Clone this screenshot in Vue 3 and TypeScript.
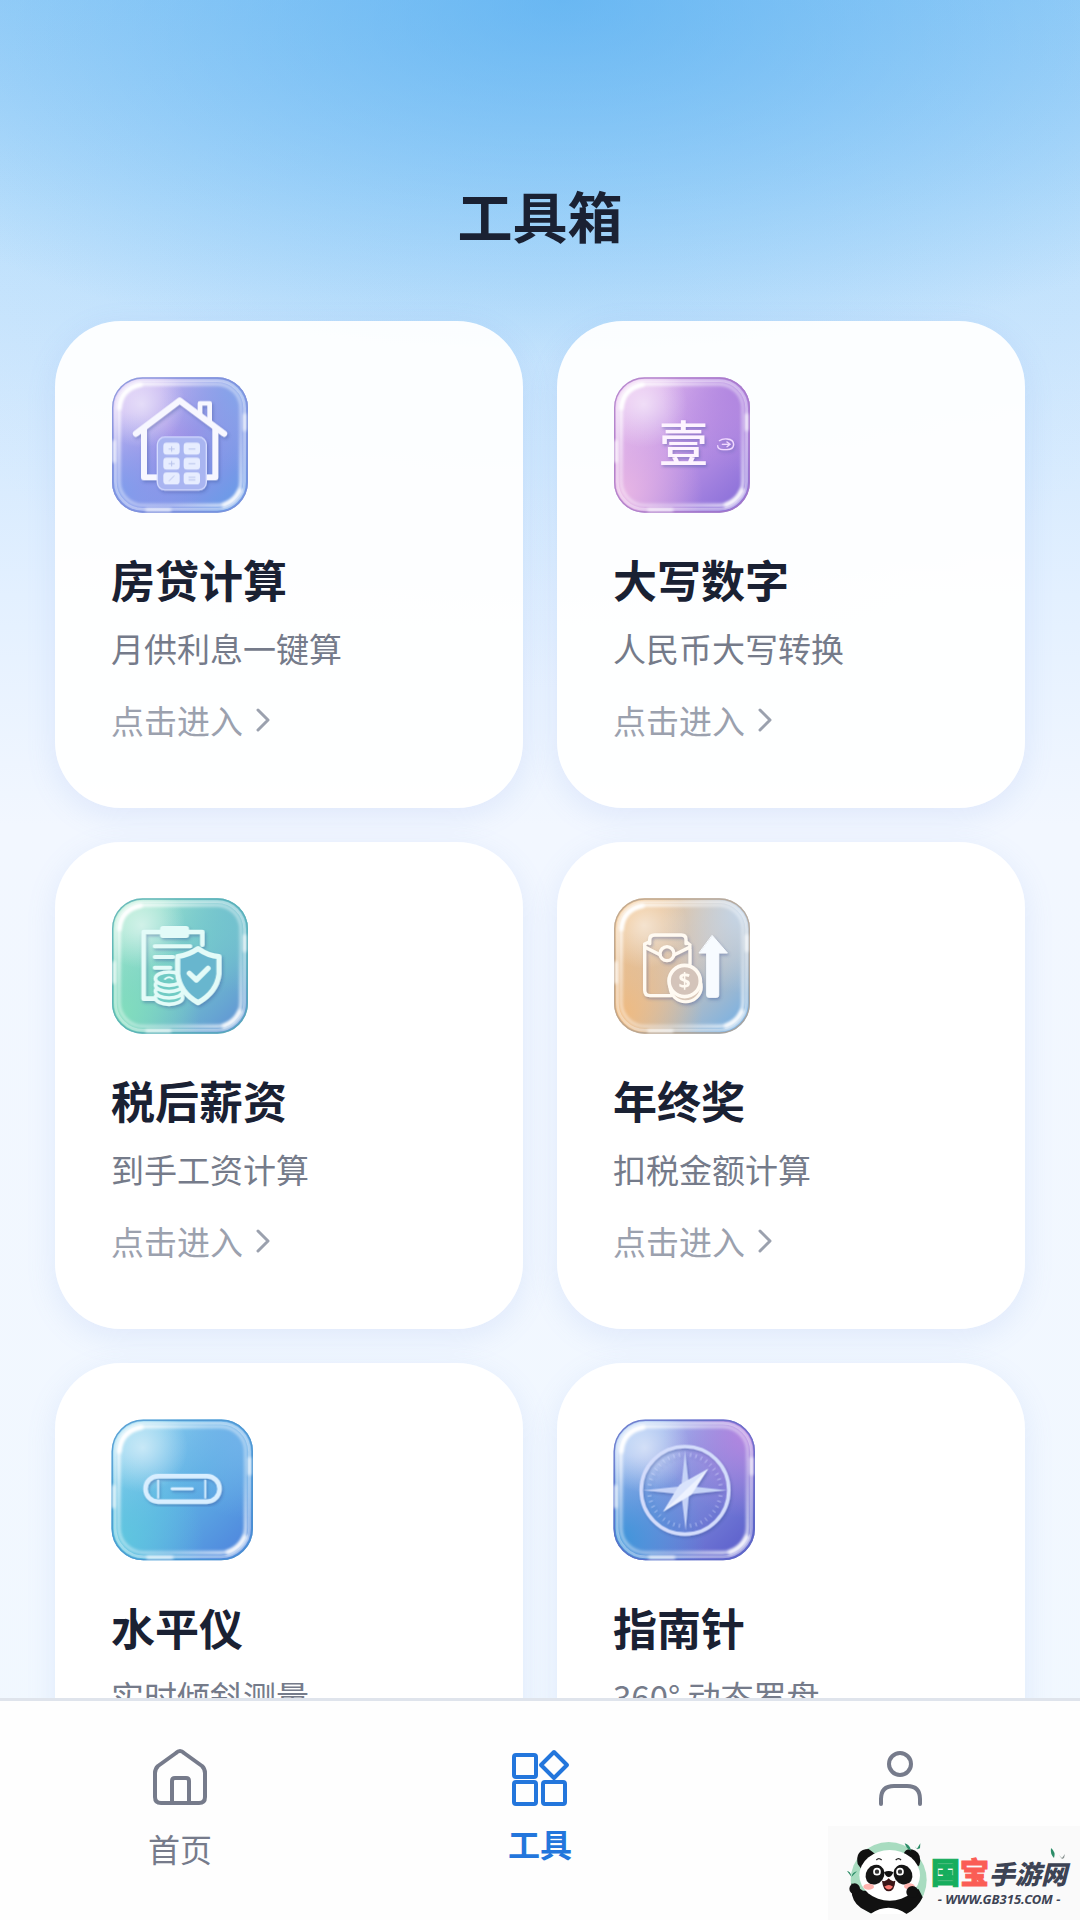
<script setup lang="ts">
interface Tool {
  id: string
  name: string
  desc: string
  box: string
  large?: boolean
  start: string
  mid: string
  end: string
  topRight: string
  bottomLeft: string
  rim: string
}

const tools: Tool[] = [
  { id: 'loan', name: '房贷计算', desc: '月供利息一键算', box: '35 37 410 408', start: '#d3c0f4', mid: '#9d90e6', end: '#6a9be8', topRight: '#83a5ea', bottomLeft: '#809dec', rim: '#7d90d8' },
  { id: 'number', name: '大写数字', desc: '人民币大写转换', box: '35 37 410 408', start: '#e8c0ef', mid: '#c196e6', end: '#8d72da', topRight: '#b086e0', bottomLeft: '#e8b6e4', rim: '#a878c4' },
  { id: 'salary', name: '税后薪资', desc: '到手工资计算', box: '35 37 410 408', start: '#a6e8ce', mid: '#76cccb', end: '#6299d4', topRight: '#73c1cf', bottomLeft: '#82ddbc', rim: '#55abb4' },
  { id: 'bonus', name: '年终奖', desc: '扣税金额计算', box: '35 37 410 408', start: '#f0c088', mid: '#d2c3b6', end: '#7fb2e0', topRight: '#c3d5e8', bottomLeft: '#efba80', rim: '#b3a08f' },
  { id: 'level', name: '水平仪', desc: '实时倾斜测量', box: '35 37 428 428', large: true, start: '#93d6f0', mid: '#5fb2e4', end: '#5089de', topRight: '#72b2ea', bottomLeft: '#5fc6df', rim: '#4791cd' },
  { id: 'compass', name: '指南针', desc: '360° 动态罗盘', box: '35 37 428 428', large: true, start: '#a8c8f4', mid: '#808fdc', end: '#5f62cd', topRight: '#b585e0', bottomLeft: '#3f95da', rim: '#5d69c4' },
]

const ticks = Array.from({ length: 40 }, (_, i) => i * 9).filter((a) => a % 90 !== 0)
</script>

<template>
  <div class="app">
    <main class="content">
      <header class="header">
        <h1>工具箱</h1>
      </header>
      <section class="grid">
        <a v-for="tool in tools" :key="tool.id" class="card" :class="{ tall: tool.large }" href="#">
          <svg class="tile" :viewBox="tool.box" aria-hidden="true">
            <defs>
              <linearGradient :id="tool.id + '-base'" x1="0" y1="0" x2="1" y2="1">
                <stop offset="0.1" :stop-color="tool.start" />
                <stop offset="0.5" :stop-color="tool.mid" />
                <stop offset="0.9" :stop-color="tool.end" />
              </linearGradient>
              <radialGradient :id="tool.id + '-tr'" cx="0.95" cy="0.1" r="0.6">
                <stop offset="0" :stop-color="tool.topRight" />
                <stop offset="1" :stop-color="tool.topRight" stop-opacity="0" />
              </radialGradient>
              <radialGradient :id="tool.id + '-bl'" cx="0.05" cy="0.85" r="0.6">
                <stop offset="0" :stop-color="tool.bottomLeft" />
                <stop offset="1" :stop-color="tool.bottomLeft" stop-opacity="0" />
              </radialGradient>
              <radialGradient :id="tool.id + '-glow'" cx="0.22" cy="0.2" r="0.32">
                <stop offset="0" stop-color="#fff" stop-opacity="0.55" />
                <stop offset="1" stop-color="#fff" stop-opacity="0" />
              </radialGradient>
              <linearGradient :id="tool.id + '-edge'" x1="0" y1="0" x2="1" y2="1">
                <stop offset="0" stop-color="#fff" stop-opacity="1" />
                <stop offset="0.35" stop-color="#fff" stop-opacity="0.5" />
                <stop offset="0.7" stop-color="#fff" stop-opacity="0.4" />
                <stop offset="1" stop-color="#fff" stop-opacity="0.9" />
              </linearGradient>
              <filter :id="tool.id + '-soft'" x="-20%" y="-20%" width="140%" height="140%">
                <feGaussianBlur stdDeviation="4" />
              </filter>
              <filter :id="tool.id + '-shade'" x="-20%" y="-20%" width="140%" height="140%">
                <feDropShadow dx="4" dy="6" stdDeviation="4" flood-color="#38509a" flood-opacity="0.38" />
              </filter>
            </defs>

            <g :transform="tool.large ? 'translate(-1 -1) scale(1.045)' : undefined">
              <rect v-for="layer in ['base', 'tr', 'bl', 'glow']" :key="layer" x="36" y="38" width="408" height="406" rx="92" :fill="`url(#${tool.id}-${layer})`" />
              <rect x="38" y="40" width="404" height="402" rx="90" fill="none" :stroke="tool.rim" stroke-width="4" opacity="0.8" />
              <rect x="46" y="48" width="388" height="386" rx="83" fill="none" stroke="#fff" stroke-width="8" opacity="0.38" />
              <rect x="57" y="58" width="366" height="364" rx="72" fill="none" :stroke="`url(#${tool.id}-edge)`" stroke-width="10" :filter="`url(#${tool.id}-soft)`" />
              <g fill="none" stroke="#fff" stroke-linecap="round" :filter="`url(#${tool.id}-soft)`">
                <path d="M58 130Q63 72 122 60" stroke-width="13" />
                <path d="M434 150V195M140 436H210M42 230V290" stroke-width="9" opacity="0.8" />
                <path d="M372 422Q405 410 421 378" stroke-width="14" opacity="0.85" />
              </g>
            </g>

            <g v-if="tool.id === 'loan'" :filter="`url(#${tool.id}-shade)`" fill="none" stroke="#f7f7ff" stroke-linecap="round" stroke-linejoin="round">
              <path d="M300 146V116H329V170" stroke-width="14" />
              <path d="M108 207L239 108L372 207" stroke-width="19" />
              <path d="M132 194V338H346V194" stroke-width="18" />
              <rect x="172" y="217" width="147" height="159" rx="23" fill="#a9b5f1" stroke="#d5dcff" stroke-width="4" />
              <g fill="#e7edff" stroke="none">
                <rect x="190" y="234" width="49" height="36" rx="10" />
                <rect x="251" y="234" width="49" height="36" rx="10" />
                <rect x="190" y="279" width="49" height="36" rx="10" />
                <rect x="251" y="279" width="49" height="36" rx="10" />
                <rect x="190" y="323" width="49" height="36" rx="10" />
                <rect x="251" y="323" width="49" height="36" rx="10" />
              </g>
              <path d="M207 253H223M215 246V260M267 253H285M207 297H223M215 290V304M267 297H285M208 348L222 334M267 338H285M267 346H285" stroke="#b9c4ec" stroke-width="3" />
            </g>

            <g v-else-if="tool.id === 'number'" :filter="`url(#${tool.id}-shade)`">
              <text x="244" y="292" class="numeral">壹</text>
              <g fill="none" stroke="#f0d9ff" stroke-width="4" stroke-linecap="round">
                <path d="M352 228Q360 222 375 223Q395 224 395 240Q394 255 375 255H363Q347 254 347 243" />
                <path d="M361 239H383M375 232L384 239L375 246" />
              </g>
            </g>

            <g v-else-if="tool.id === 'salary'" :filter="`url(#${tool.id}-shade)`" fill="none" stroke="#e3fbf8" stroke-linecap="round" stroke-linejoin="round">
              <path d="M181 139H131V339H164M266 139H307V177" stroke-width="14" />
              <rect x="180" y="121" width="87" height="36" rx="9" fill="#e3fbf8" stroke="none" />
              <path d="M164 182H271M164 214H219M164 246H211" stroke-width="12" />
              <g fill="#6fcbc4" stroke-width="11">
                <ellipse cx="207" cy="336" rx="41" ry="20" />
                <ellipse cx="207" cy="317" rx="41" ry="20" />
                <ellipse cx="207" cy="298" rx="41" ry="20" />
                <ellipse cx="207" cy="279" rx="41" ry="20" />
                <path d="M195 280Q207 270 218 279" stroke-width="6" />
              </g>
              <path d="M294 189Q324 211 357 213V265Q350 320 294 351Q239 320 233 265V213Q267 208 294 189Z" fill="#67b6ce" stroke-width="16" />
              <path d="M268 263L289 283L324 248" stroke-width="16" />
            </g>

            <g v-else-if="tool.id === 'bonus'" :filter="`url(#${tool.id}-shade)`" fill="none" stroke="#fffaf2" stroke-linecap="round" stroke-linejoin="round">
              <path d="M143 174V162Q143 148 158 148H238Q252 148 252 162V174M128 178V314Q128 330 144 330H207M264 190V235M128 184L174 207M264 184L217 207M128 184V175L143 168M252 168L264 178" stroke-width="10" />
              <circle cx="195" cy="204" r="21" stroke-width="10" />
              <ellipse cx="251" cy="304" rx="47" ry="44" fill="#d9c7b8" stroke-width="9" />
              <circle cx="248" cy="286" r="47" fill="#d4c4ba" stroke-width="11" />
              <text x="248" y="308" class="dollar">$</text>
              <path d="M331 150L376 202H350V329Q350 335 344 335H320Q314 335 314 329V202H292Z" fill="#f7fbff" stroke="#f7fbff" stroke-width="3" />
            </g>

            <g v-else-if="tool.id === 'level'" :filter="`url(#${tool.id}-shade)`" fill="none" stroke="#d8eeff" stroke-linecap="round">
              <rect x="139" y="209" width="223" height="77" rx="38" stroke-width="14" />
              <path d="M177 222V274M319 222V274" stroke-width="6" />
              <path d="M219 247H280" stroke-width="9" />
            </g>

            <g v-else :filter="`url(#${tool.id}-shade)`">
              <circle cx="252" cy="252" r="132" fill="none" stroke="#d3dcfb" stroke-width="11" />
              <g stroke="#dce3ff" stroke-width="2" opacity="0.8">
                <line v-for="angle in ticks" :key="angle" x1="252" y1="138" x2="252" y2="150" :transform="`rotate(${angle} 252 252)`" />
              </g>
              <path d="M252 132L264 239L378 252L264 264L254 373L241 264L126 252L241 240Z" fill="#c6d3f7" />
              <path d="M322 187L272 265L186 317L236 235Z" fill="#edf2ff" />
              <path d="M322 187L254 251L186 317L236 235Z" fill="#d9e3fc" />
            </g>
          </svg>
          <h2>{{ tool.name }}</h2>
          <p>{{ tool.desc }}</p>
          <span class="enter">
            点击进入
            <svg viewBox="0 0 14 24" aria-hidden="true"><path d="M2 2L12 12L2 22" /></svg>
          </span>
        </a>
      </section>
    </main>

    <nav class="tabs">
      <a href="#" class="tab">
        <svg viewBox="0 0 60 60" aria-hidden="true">
          <path d="M5 26Q5 22 8 19L26 6Q30 2 34 6L52 19Q55 22 55 26V50Q55 56 49 56H11Q5 56 5 50Z" />
          <path d="M22 56V34Q22 31 25 31H36Q39 31 39 34V56" />
        </svg>
        <span>首页</span>
      </a>
      <a href="#" class="tab active" aria-current="page">
        <svg viewBox="0 0 60 60" aria-hidden="true">
          <rect x="4" y="8" width="22" height="22" rx="2" />
          <rect x="4" y="35" width="22" height="22" rx="2" />
          <rect x="33" y="35" width="22" height="22" rx="2" />
          <path d="M44 5L57 18L44 31L31 18Z" />
        </svg>
        <span>工具</span>
      </a>
      <a href="#" class="tab" aria-label="我的">
        <svg viewBox="0 0 60 60" aria-hidden="true">
          <circle cx="30" cy="17" r="11" />
          <path d="M11 57V52Q11 39 24 39H37Q50 39 50 52V57" />
        </svg>
      </a>
    </nav>

    <aside class="brand">
      <svg class="panda" viewBox="80 448 240 222" aria-hidden="true">
        <circle cx="205" cy="568" r="114" fill="#a8dcc0" />
        <path d="M128 600L94 578Q88 630 122 652L155 670H258Q292 653 307 620L295 596Z" fill="#111" />
        <path d="M112 520Q104 476 145 475L166 491L123 535ZM250 489Q258 469 285 480Q306 492 297 524L288 531Z" fill="#111" />
        <ellipse cx="208" cy="554" rx="91" ry="76" fill="#fff" />
        <path d="M150 670Q205 632 259 670Z" fill="#fff" />
        <ellipse cx="164" cy="552" rx="27" ry="31" transform="rotate(35 164 552)" fill="#151515" />
        <ellipse cx="248" cy="552" rx="27" ry="31" transform="rotate(-35 248 552)" fill="#151515" />
        <g fill="#333" stroke="#fff" stroke-width="5">
          <circle cx="170" cy="543" r="9" />
          <circle cx="239" cy="543" r="9" />
        </g>
        <path d="M191 545Q205 537 219 545Q214 559 205 559Q196 559 191 545Z" fill="#111" />
        <path d="M185 570Q196 575 205 563Q214 575 225 570Q223 601 205 602Q188 601 185 570Z" fill="#3b1617" />
        <path d="M192 588Q206 578 218 588Q206 605 192 588Z" fill="#fb7770" />
        <ellipse cx="145" cy="588" rx="16" ry="9" fill="#ffb3ae" />
        <ellipse cx="267" cy="587" rx="16" ry="9" fill="#ffb3ae" />
        <path d="M168 508Q175 500 184 508M226 508Q235 500 242 508" fill="none" stroke="#222" stroke-width="4" />
        <circle cx="103" cy="594" r="16" fill="#111" />
        <circle cx="276" cy="604" r="18" fill="#111" />
        <path d="M80 541Q91 542 93 558ZM94 558Q96 545 110 542ZM253 458Q269 462 272 480Q260 478 253 458ZM283 467L290 474L300 458L299 473L290 476Z" fill="#2c8d68" />
      </svg>
      <div class="wordmark">
        <div class="brand-name"><b class="big green">国</b><b class="big red">宝</b><b class="slanted">手游网</b></div>
        <div class="site">- WWW.GB315.COM -</div>
      </div>
      <svg class="leaves" viewBox="0 0 16 12" aria-hidden="true">
        <path d="M1 0Q6 4 4 10Q0 6 1 0Z" fill="#2c8d68" />
        <path d="M9 7L12 10L15 6L14 10L12 11Z" fill="#87908f" />
      </svg>
    </aside>
  </div>
</template>

<style>
html,
body {
  margin: 0;
}
</style>

<style scoped>
.app {
  position: relative;
  display: flex;
  flex-direction: column;
  height: 100vh;
  overflow: hidden;
  font-family: "Noto Sans CJK SC", "Noto Sans", sans-serif;
  color: #1a2133;
  background:
    radial-gradient(ellipse 75% 19% at 52% 0, rgba(70, 165, 238, 0.6), rgba(70, 165, 238, 0)),
    radial-gradient(ellipse 70% 36% at 50% 0, rgba(148, 209, 250, 0.35), rgba(148, 209, 250, 0)),
    linear-gradient(180deg, #a3d4f9 0, #bfe1fc 11%, #cde6fd 18%, #e3f0ff 31%, #f2f7ff 43%, #f1f8ff 100%);
}

.content {
  flex: 1;
  min-height: 0;
  overflow-y: auto;
  scrollbar-width: none;
}

.header {
  padding: 174px 0 67px;
  text-align: center;
}

h1 {
  margin: 0;
  font-size: 55px;
  line-height: 80px;
  font-weight: 700;
}

.grid {
  display: grid;
  grid-template-columns: 1fr 1fr;
  gap: 34px;
  padding: 0 55px 34px;
}

.card {
  display: flex;
  flex-direction: column;
  align-items: flex-start;
  padding: 56px 56px 66px;
  border-radius: 66px;
  background: rgba(255, 255, 255, 0.94);
  box-shadow: 0 8px 30px rgba(110, 150, 225, 0.14);
  color: inherit;
  text-decoration: none;
}

.tile {
  display: block;
  width: 138px;
  height: 136px;
}

.tall .tile {
  width: 142px;
  height: 142px;
}

.numeral {
  font-size: 148px;
  font-weight: 500;
  text-anchor: middle;
  fill: #fdf3ff;
}

.dollar {
  font-family: "Noto Sans", sans-serif;
  font-size: 64px;
  font-weight: 700;
  text-anchor: middle;
  fill: #fffaf2;
  stroke: none;
}

h2 {
  margin: 36px 0 17px;
  font-size: 44px;
  line-height: 60px;
  font-weight: 700;
}

p {
  margin: 0 0 28px;
  font-size: 33px;
  line-height: 44px;
  color: #757b8a;
}

.enter {
  display: flex;
  align-items: center;
  gap: 13px;
  font-size: 33px;
  line-height: 44px;
  color: #9ba1ae;
}

.enter svg {
  width: 14px;
  height: 24px;
  fill: none;
  stroke: currentColor;
  stroke-width: 3;
  stroke-linecap: round;
  stroke-linejoin: round;
}

.tabs {
  display: flex;
  height: 219px;
  border-top: 3px solid #dfe4ec;
  background: #fefefe;
}

.tab {
  flex: 1;
  display: flex;
  flex-direction: column;
  align-items: center;
  gap: 21px;
  padding-top: 46px;
  font-size: 32px;
  line-height: 40px;
  color: #767b8b;
  text-decoration: none;
}

.tab.active {
  gap: 16px;
  color: #2376dc;
  font-weight: 700;
}

.tab svg {
  width: 60px;
  height: 60px;
  fill: none;
  stroke: currentColor;
  stroke-width: 4;
  stroke-linecap: round;
  stroke-linejoin: round;
}

.brand {
  position: absolute;
  right: 0;
  bottom: 0;
  display: flex;
  align-items: center;
  gap: 4px;
  box-sizing: border-box;
  width: 252px;
  height: 94px;
  padding: 8px 12px 0 19px;
  background: #fafafa;
  color: #3d4354;
}

.panda {
  flex: none;
  width: 80px;
  height: 74px;
}

.wordmark {
  display: flex;
  flex-direction: column;
  align-items: center;
  padding-top: 6px;
  white-space: nowrap;
}

.brand-name {
  display: flex;
  align-items: baseline;
  font-size: 26px;
  line-height: 36px;
  font-weight: 900;
}

.slanted {
  font-style: italic;
}

.big {
  font-size: 29px;
  -webkit-text-stroke: 1px currentColor;
}

.green {
  color: #16ad5d;
}

.red {
  color: #fa5d55;
}

.site {
  font-family: "Noto Sans", sans-serif;
  font-size: 13px;
  line-height: 16px;
  font-style: italic;
  font-weight: 700;
}

.leaves {
  position: absolute;
  top: 22px;
  right: 14px;
  width: 16px;
  height: 12px;
}
</style>
